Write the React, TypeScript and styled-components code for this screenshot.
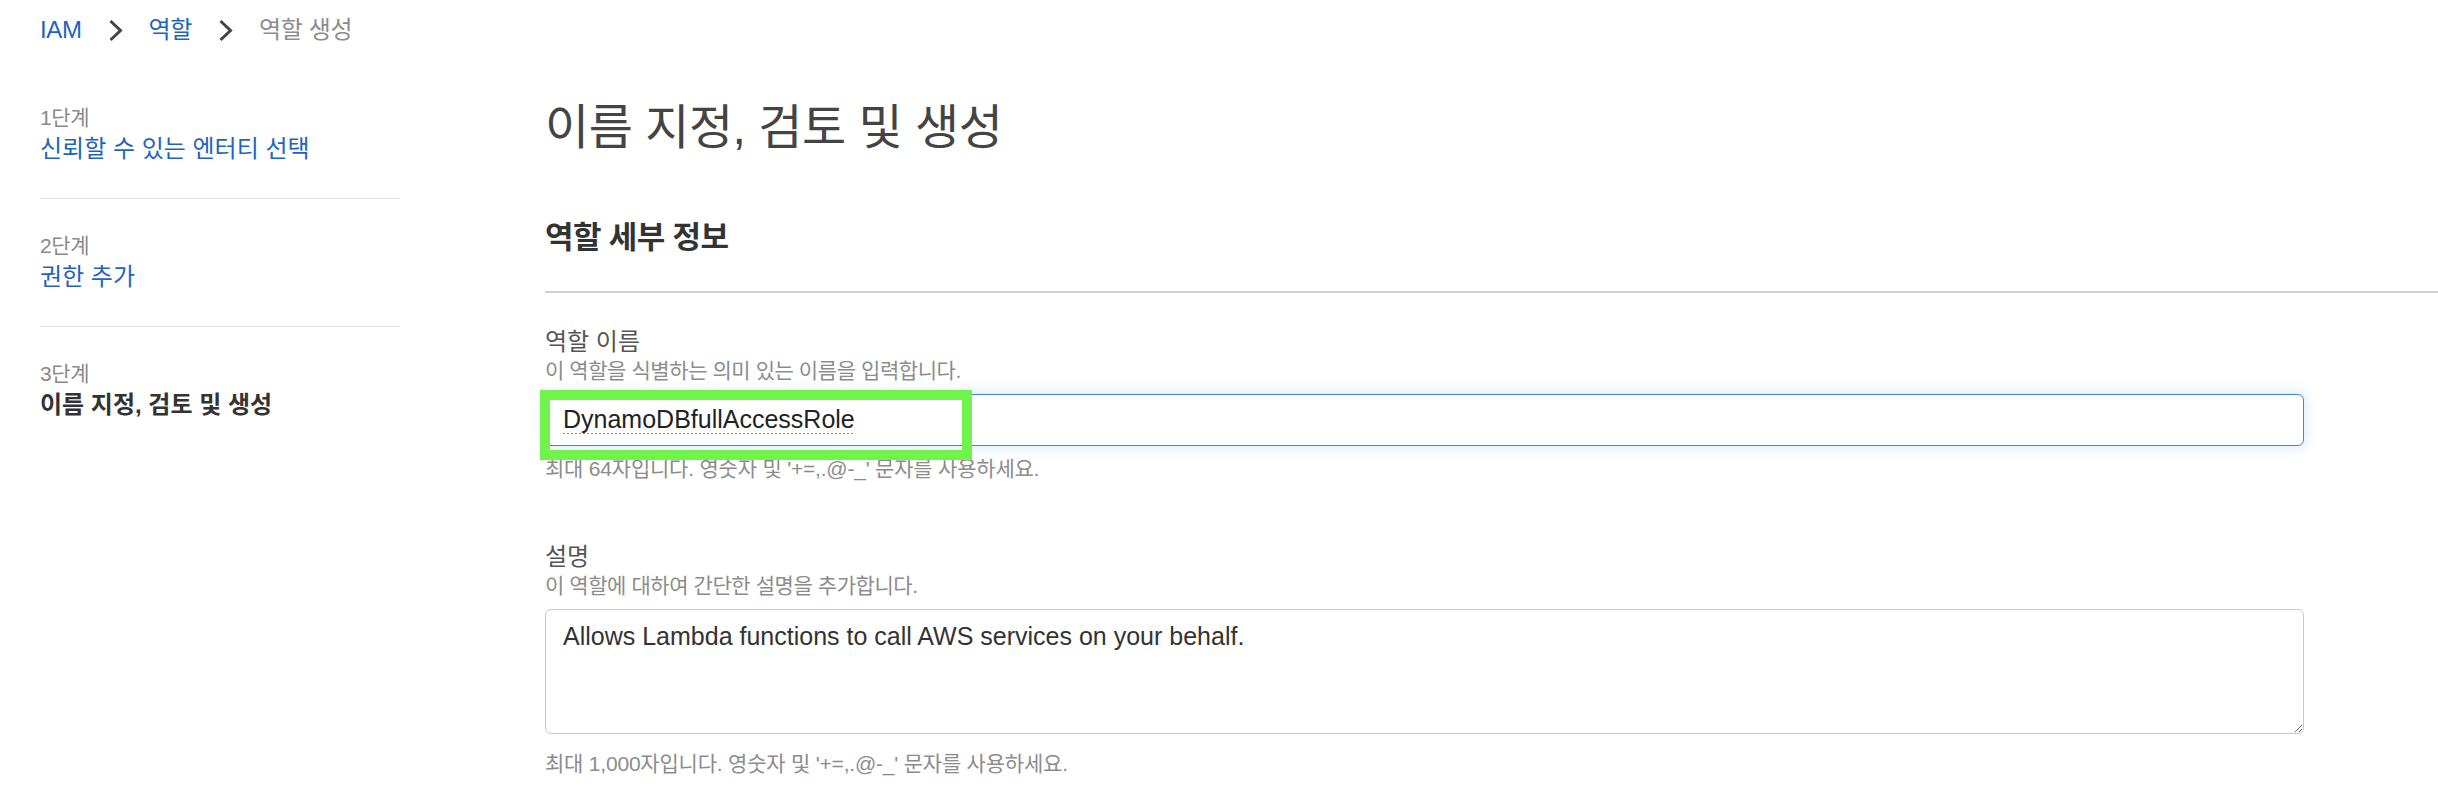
import React from "react";
import styled, { createGlobalStyle } from "styled-components";

const SANS = `"Liberation Sans", "Noto Sans CJK KR", sans-serif`;

const GlobalStyle = createGlobalStyle`
  html, body {
    margin: 0;
    padding: 0;
    background: #ffffff;
  }
  body {
    font-family: ${SANS};
    color: #333333;
  }
  * { box-sizing: border-box; }
`;

const Page = styled.div`
  width: 100%;
  min-height: 802px;
  background: #ffffff;
`;

const Breadcrumbs = styled.nav`
  display: flex;
  align-items: center;
  gap: 26px;
  padding: 12px 0 0 40px;
  font-size: 24px;
  line-height: 36px;
`;

const Crumb = styled.a<{ $current?: boolean }>`
  color: ${(p) => (p.$current ? "#8c8c8c" : "#1d64c2")};
  text-decoration: none;
  letter-spacing: -0.015em;
  white-space: nowrap;
`;

const ChevronSvg = styled.svg`
  width: 15px;
  height: 23px;
  flex: none;
  display: block;
`;

const Chevron = () => (
  <ChevronSvg viewBox="0 0 15 23" aria-hidden="true">
    <polyline
      points="2.5,2 12.5,11.5 2.5,21"
      fill="none"
      stroke="#444444"
      strokeWidth="3"
      strokeLinecap="butt"
      strokeLinejoin="miter"
    />
  </ChevronSvg>
);

const Layout = styled.div`
  display: flex;
  align-items: flex-start;
  gap: 145px;
  margin-top: 23px;
  padding-left: 40px;
`;

const Sidebar = styled.ol`
  list-style: none;
  margin: 0;
  padding: 0;
  width: 360px;
  flex: none;
`;

const Step = styled.li`
  padding: 32.5px 0;
  border-bottom: 1px solid #e2e2e2;
  &:last-child {
    border-bottom: none;
  }
`;

const StepLabel = styled.div`
  font-size: 21px;
  line-height: 28px;
  color: #8a8a8a;
  letter-spacing: -0.02em;
`;

const StepLink = styled.a<{ $active?: boolean }>`
  display: block;
  font-size: 24px;
  line-height: 34px;
  text-decoration: none;
  color: ${(p) => (p.$active ? "#333333" : "#1d64c2")};
  font-weight: ${(p) => (p.$active ? 700 : 400)};
  white-space: nowrap;
`;

const Main = styled.main`
  flex: 1;
  min-width: 0;
`;

const Title = styled.h1`
  margin: 27.5px 0 0;
  font-size: 48px;
  line-height: 58px;
  font-weight: 400;
  color: #444444;
  letter-spacing: -0.01em;
`;

const Section = styled.section`
  margin-top: 61px;
`;

const SectionHeader = styled.h2`
  margin: 0;
  padding-bottom: 33px;
  border-bottom: 2px solid #cfcfcf;
  font-size: 31px;
  line-height: 40px;
  font-weight: 700;
  color: #333333;
  letter-spacing: -0.02em;
`;

const Fields = styled.div`
  padding: 33px 134px 0 0;
`;

const Field = styled.div`
  & + & {
    margin-top: 59px;
  }
`;

const Label = styled.label`
  display: block;
  font-size: 24px;
  line-height: 32px;
  color: #555555;
`;

const Hint = styled.div`
  font-size: 21px;
  line-height: 26px;
  color: #8c8c8c;
  letter-spacing: -0.02em;
`;

const Control = styled.div`
  position: relative;
  margin-top: 10px;
`;

const TextInput = styled.input`
  display: block;
  width: 100%;
  height: 52px;
  padding: 0 17px;
  border: 1px solid #4285e0;
  border-radius: 6px;
  box-shadow: 0 0 14px 3px rgba(66, 133, 224, 0.16);
  font-family: ${SANS};
  font-size: 25px;
  color: #222222;
  background: #ffffff;
  outline: none;
  text-decoration: underline dotted #ea6b5d;
  text-decoration-thickness: 2px;
  text-underline-offset: 5px;
`;

const Highlight = styled.div`
  position: absolute;
  left: -5px;
  top: -4px;
  width: 432px;
  height: 70px;
  border: 10px solid #70f34b;
  pointer-events: none;
`;

const TextArea = styled.textarea`
  display: block;
  width: 100%;
  height: 125px;
  padding: 11px 17px;
  border: 1px solid #c8c8c8;
  border-radius: 6px;
  font-family: ${SANS};
  font-size: 25px;
  line-height: 30px;
  color: #333333;
  background: #ffffff;
  outline: none;
  resize: vertical;
`;

const Constraint = styled.div<{ $gap: number }>`
  margin-top: ${(p) => p.$gap}px;
  font-size: 21px;
  line-height: 26px;
  color: #8c8c8c;
  letter-spacing: -0.01em;
`;

export default function App() {
  return (
    <Page>
      <GlobalStyle />
      <Breadcrumbs aria-label="Breadcrumbs">
        <Crumb href="#">IAM</Crumb>
        <Chevron />
        <Crumb href="#">역할</Crumb>
        <Chevron />
        <Crumb $current>역할 생성</Crumb>
      </Breadcrumbs>
      <Layout>
        <Sidebar>
          <Step>
            <StepLabel>1단계</StepLabel>
            <StepLink href="#">신뢰할 수 있는 엔터티 선택</StepLink>
          </Step>
          <Step>
            <StepLabel>2단계</StepLabel>
            <StepLink href="#">권한 추가</StepLink>
          </Step>
          <Step>
            <StepLabel>3단계</StepLabel>
            <StepLink $active>이름 지정, 검토 및 생성</StepLink>
          </Step>
        </Sidebar>
        <Main>
          <Title>이름 지정, 검토 및 생성</Title>
          <Section>
            <SectionHeader>역할 세부 정보</SectionHeader>
            <Fields>
              <Field>
                <Label htmlFor="role-name">역할 이름</Label>
                <Hint>이 역할을 식별하는 의미 있는 이름을 입력합니다.</Hint>
                <Control>
                  <TextInput
                    id="role-name"
                    defaultValue="DynamoDBfullAccessRole"
                    spellCheck
                  />
                  <Highlight />
                </Control>
                <Constraint $gap={10}>
                  최대 64자입니다. 영숫자 및 '+=,.@-_' 문자를 사용하세요.
                </Constraint>
              </Field>
              <Field>
                <Label htmlFor="role-desc">설명</Label>
                <Hint>이 역할에 대하여 간단한 설명을 추가합니다.</Hint>
                <Control>
                  <TextArea
                    id="role-desc"
                    defaultValue="Allows Lambda functions to call AWS services on your behalf."
                  />
                </Control>
                <Constraint $gap={17}>
                  최대 1,000자입니다. 영숫자 및 '+=,.@-_' 문자를 사용하세요.
                </Constraint>
              </Field>
            </Fields>
          </Section>
        </Main>
      </Layout>
    </Page>
  );
}
